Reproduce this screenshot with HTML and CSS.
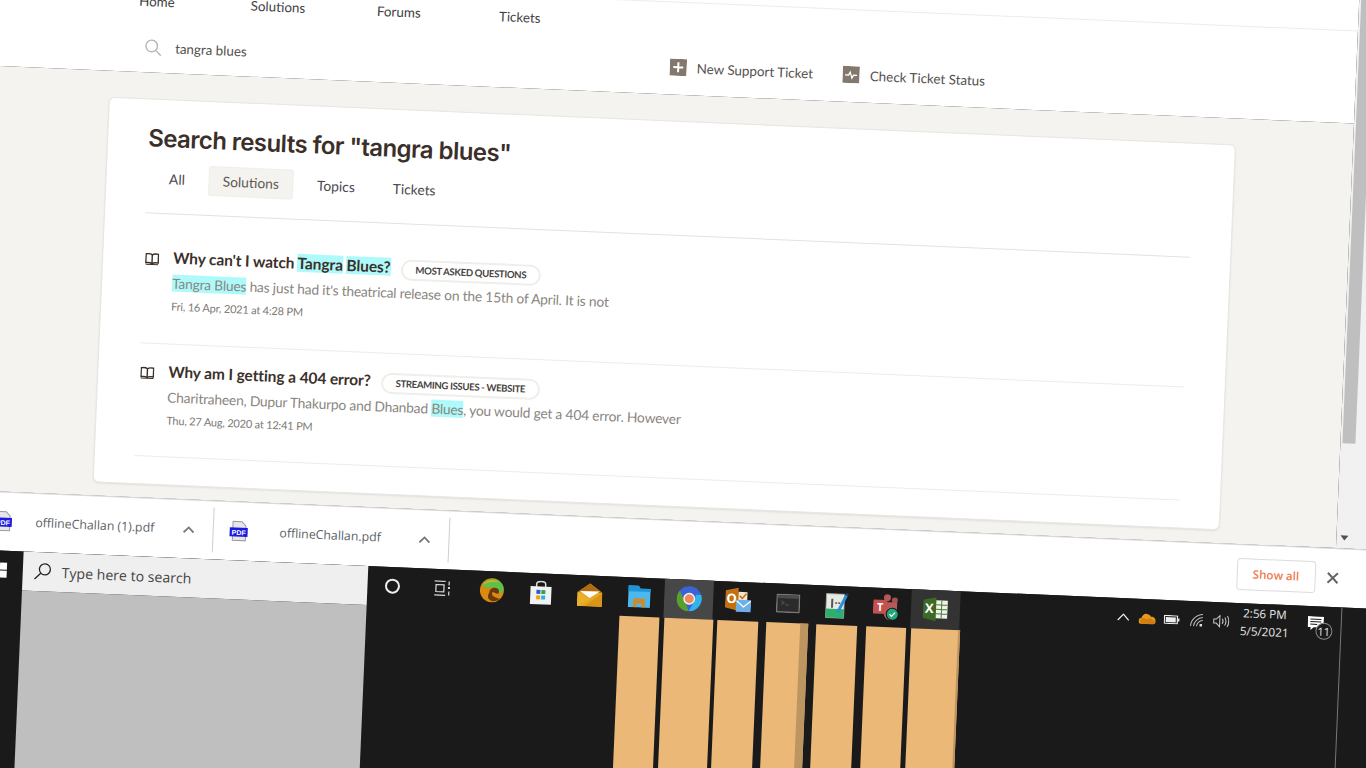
FILE: index.html
```html
<!DOCTYPE html>
<html lang="en">
<head>
    <meta charset="UTF-8">
    <title>Search results</title>
    <link rel="stylesheet" href="styles.css">
</head>
<body>
<div class="screen">
    <div class="browser">
        <div class="page">
            <header class="header">
                <div class="nav-line"></div>
                <nav class="nav">
                    <a>Home</a>
                    <a>Solutions</a>
                    <a>Forums</a>
                    <a>Tickets</a>
                </nav>
                <div class="tools">
                    <div class="search">
                        <svg width="18" height="18" viewBox="0 0 18 18" fill="none" stroke="#b5b5b5" stroke-width="1.4"><circle cx="7.5" cy="7.5" r="5.8"/><path d="M12 12l5 5"/></svg>
                        <span>tangra blues</span>
                    </div>
                    <a class="tool-link">
                        <svg width="17" height="17" viewBox="0 0 17 17"><rect width="17" height="17" fill="#83786d"/><path d="M8.5 3.5v10M3.5 8.5h10" stroke="#fff" stroke-width="2"/></svg>
                        New Support Ticket
                    </a>
                    <a class="tool-link">
                        <svg width="17" height="17" viewBox="0 0 17 17"><rect width="17" height="17" fill="#83786d"/><path d="M2.5 9h3.5l1.5-3 2 6 1.5-3h3.5" fill="none" stroke="#fff" stroke-width="1.3"/></svg>
                        Check Ticket Status
                    </a>
                </div>
            </header>
            <main class="main">
                <section class="card">
                    <h1 class="card-title">Search results for "tangra blues"</h1>
                    <div class="tabs">
                        <a class="tab">All</a>
                        <a class="tab tab-active">Solutions</a>
                        <a class="tab">Topics</a>
                        <a class="tab">Tickets</a>
                    </div>
                    <div class="results">
                        <article class="result">
                            <svg class="book" width="14" height="13" viewBox="0 0 14 13" fill="none" stroke="#3a3028" stroke-width="1.4"><path d="M7 2.2C5.5 1 3 1 .8 1.4v8.8C3 9.8 5.5 9.8 7 11c1.500-1.200 4-1.200 6.200-.8V1.400C11 1 8.500 1 7 2.200zM7 2.200V11"/><path d="M.8 11.800h12.400" stroke-width="1"/></svg>
                            <div>
                                <div class="result-head">
                                    <h2 class="result-title">Why can't I watch <mark>Tangra</mark> <mark>Blues?</mark></h2>
                                    <span class="pill">MOST ASKED QUESTIONS</span>
                                </div>
                                <p class="snippet"><mark>Tangra Blues</mark> has just had it's theatrical release on the 15th of April. It is not</p>
                                <p class="date">Fri, 16 Apr, 2021 at 4:28 PM</p>
                            </div>
                        </article>
                        <article class="result">
                            <svg class="book" width="14" height="13" viewBox="0 0 14 13" fill="none" stroke="#3a3028" stroke-width="1.4"><path d="M7 2.2C5.5 1 3 1 .8 1.4v8.8C3 9.8 5.5 9.8 7 11c1.500-1.200 4-1.200 6.200-.8V1.400C11 1 8.500 1 7 2.200zM7 2.200V11"/><path d="M.8 11.800h12.400" stroke-width="1"/></svg>
                            <div>
                                <div class="result-head">
                                    <h2 class="result-title">Why am I getting a 404 error?</h2>
                                    <span class="pill">STREAMING ISSUES - WEBSITE</span>
                                </div>
                                <p class="snippet">Charitraheen, Dupur Thakurpo and Dhanbad <mark>Blues</mark>, you would get a 404 error. However</p>
                                <p class="date">Thu, 27 Aug, 2020 at 12:41 PM</p>
                            </div>
                        </article>
                    </div>
                </section>
            </main>
        </div>
        <div class="scrollbar">
            <div class="thumb"></div>
            <div class="arrow"></div>
        </div>
    </div>

    <div class="shelf">
        <div class="dl-item">
            <svg class="pdf" width="20" height="21" viewBox="0 0 20 21"><path d="M4 1h9l4 4v15H4z" fill="#e6e6e6" stroke="#9a9a9a"/><rect x="1" y="7" width="18" height="9" fill="#1a1ae0"/><text x="10" y="14.500" class="pdf-label">PDF</text></svg>
            <span class="dl-name">offlineChallan (1).pdf</span>
            <svg class="dl-chevron" width="12" height="8" viewBox="0 0 12 8" fill="none" stroke="#777" stroke-width="1.800"><path d="M1 7l5-5 5 5"/></svg>
        </div>
        <div class="dl-item">
            <svg class="pdf" width="20" height="21" viewBox="0 0 20 21"><path d="M4 1h9l4 4v15H4z" fill="#e6e6e6" stroke="#9a9a9a"/><rect x="1" y="7" width="18" height="9" fill="#1a1ae0"/><text x="10" y="14.500" class="pdf-label">PDF</text></svg>
            <span class="dl-name">offlineChallan.pdf</span>
            <svg class="dl-chevron" width="12" height="8" viewBox="0 0 12 8" fill="none" stroke="#777" stroke-width="1.800"><path d="M1 7l5-5 5 5"/></svg>
        </div>
        <a class="show-all">Show all</a>
        <svg class="shelf-close" width="20" height="12" viewBox="0 0 20 12" fill="none" stroke="#666" stroke-width="2"><path d="M5 1l10 10M15 1L5 11"/></svg>
    </div>

    <div class="taskbar">
        <div class="task-top">
            <div class="start">
                <div class="win-logo"><i></i><i></i><i></i><i></i></div>
            </div>
            <div class="task-search">
                <svg width="18" height="18" viewBox="0 0 18 18" fill="none" stroke="#222" stroke-width="1.300"><circle cx="11" cy="7" r="5.500"/><path d="M7 11l-6 6"/></svg>
                <span>Type here to search</span>
            </div>
            <div class="task-icons">
                <div class="task-btn"><svg width="16" height="16" viewBox="0 0 16 16" fill="none" stroke="#eee" stroke-width="2"><circle cx="8" cy="8" r="6.500"/></svg></div>
                <div class="task-btn"><svg width="18" height="16" viewBox="0 0 18 16" fill="none" stroke="#ddd" stroke-width="1.200"><path d="M1 1h11M1 15h11M2.500 4.500h8v7h-8zM15.500 1v4M15.500 11v4"/><rect x="14.500" y="6.500" width="2" height="2" fill="#ddd" stroke="none"/></svg></div>
                <div class="task-btn"><svg width="25" height="26" viewBox="0 0 25 26"><circle cx="12.500" cy="13" r="12" fill="#d98a12"/><path d="M3 8C6 1 18-1 23 7c2 4 1 8-2 9-2-4-6-7-11-6-3 .500-5 1-7-2z" fill="#5cc24c"/><path d="M3 8c3-5 12-7 16-3-5-2-12 0-16 3z" fill="#d9b526"/><path d="M10 15c0-4 5-6 8-4 2 1 2 4 1 5-3 .500-4-2-6-1-1 2 1 4 4 5 2 1 3 1 4 1-3 3-8 4-11 1-2-2-1-5 0-7z" fill="#6b3a0a"/></svg></div>
                <div class="task-btn"><svg width="23" height="25" viewBox="0 0 23 25"><path d="M7 7V3.500C7 1.500 8.500 1 11.500 1S16 1.500 16 3.500V7" fill="none" stroke="#ddd" stroke-width="1.500"/><path d="M1 6h21v18H1z" fill="#f2f2f2"/><rect x="7" y="9.500" width="4" height="4" fill="#2b5bd6"/><rect x="12" y="9.500" width="4" height="4" fill="#3d9e3d"/><rect x="7" y="15" width="4" height="4" fill="#f5a500"/><rect x="12" y="15" width="4" height="4" fill="#21b5ee"/></svg></div>
                <div class="task-btn"><svg width="25" height="24" viewBox="0 0 25 24"><path d="M0 10L12.500 1 25 10v14H0z" fill="#e8a820"/><path d="M0 10L12.500 1 25 10z" fill="#b06a10"/><path d="M2.500 9l20-.500-10 7z" fill="#fff"/><path d="M0 10l12.500 7-12.500 7z" fill="#eab02c"/><path d="M25 10v14H7z" fill="#d9951a"/></svg></div>
                <div class="task-btn"><svg width="24" height="22" viewBox="0 0 24 22"><path d="M1 0h10l2 3h10v19H1z" fill="#4db8ec"/><path d="M1 0h10l2 3h10v3H1z" fill="#1e95d8"/><path d="M6 13h12v9h-3.500v-4h-5v4H6z" fill="#d08a2e"/></svg></div>
                <div class="task-btn task-on"><svg width="26" height="26" viewBox="0 0 24 24"><circle cx="12" cy="12" r="11.500" fill="#3b63d8"/><path d="M3 5l6 11 3 7.500C5 24 0 18 .5 12 .6 9 1.500 7 3 5z" fill="#5a9e2c"/><path d="M23.500 12c0 6-5 11.500-11.500 11.500l5-10 1-5.500h5c.3 1 .5 3 .5 4z" fill="#31b5e8"/><circle cx="12" cy="12" r="5.500" fill="#f2f2f2"/><circle cx="12" cy="12" r="4.200" fill="#ef8a5e"/></svg></div>
                <div class="task-btn"><svg width="26" height="26" viewBox="0 0 26 26"><path d="M0 3l13-3v23L0 20z" fill="#c46f12"/><text x="6.300" y="15.500" class="icon-letter">O</text><rect x="13" y="4" width="9" height="9" fill="#f3e5cf"/><path d="M14.500 8l2.500 2.500 4-5" fill="none" stroke="#c46f12" stroke-width="1.500"/><path d="M11 12h15v12H11z" fill="#6db0e8"/><path d="M11.500 13l7 6 7-6" fill="none" stroke="#fff" stroke-width="1.200"/></svg></div>
                <div class="task-btn"><svg width="24" height="19" viewBox="0 0 24 19"><rect x=".7" y=".7" width="22.600" height="17.600" fill="#2b2b2b" stroke="#777" stroke-width="1.400"/><rect x="1.500" y="1.500" width="21" height="3" fill="#4c4c4c"/><path d="M5 7l3 2-3 2M9 11h4" fill="none" stroke="#555" stroke-width="1"/></svg></div>
                <div class="task-btn"><svg width="24" height="27" viewBox="0 0 24 27"><path d="M1 2h18v24H1z" fill="#e6ebe2" stroke="#a8a8a8" stroke-width=".8"/><path d="M1 17h18v9H1z" fill="#2fae6e"/><path d="M6 7h2v9H6z" fill="#555"/><path d="M10 11h5" stroke="#555" stroke-width="1.500" stroke-dasharray="2 1"/><path d="M13 20L21 3" stroke="#2a8fd8" stroke-width="3"/><path d="M21 3l1-2" stroke="#2a3f66" stroke-width="3"/></svg></div>
                <div class="task-btn"><svg width="26" height="27" viewBox="0 0 26 27"><circle cx="14" cy="3.500" r="3.500" fill="#b7575a"/><circle cx="21.500" cy="6" r="3" fill="#a85054"/><path d="M10 8h14v11a6 6 0 0 1-13 1z" fill="#b5595b"/><rect x="0" y="6" width="14" height="14" rx="1" fill="#c4504f"/><text x="7" y="17" class="icon-letter icon-letter-mid">T</text><circle cx="19.500" cy="20" r="6.500" fill="#1a1a1a"/><circle cx="19.500" cy="20" r="5.500" fill="#22a87a"/><path d="M16.800 20l2 2 3.500-3.800" fill="none" stroke="#fff" stroke-width="1.200"/></svg></div>
                <div class="task-btn task-on-dim"><svg width="25" height="24" viewBox="0 0 25 24"><path d="M0 3l13-3v24L0 21z" fill="#3c6a26"/><text x="6.300" y="16" class="icon-letter">X</text><rect x="13" y="3" width="11.500" height="18" fill="#eef3ea"/><path d="M13 7.500h11.500M13 12h11.500M13 16.500h11.500M18.500 3v18" stroke="#4d7a38" stroke-width="1"/></svg></div>
            </div>
            <div class="tray">
                <div class="tray-icon"><svg width="13" height="8" viewBox="0 0 13 8" fill="none" stroke="#eee" stroke-width="1.300"><path d="M1 7l5.500-6L12 7"/></svg></div>
                <div class="tray-icon"><svg width="17" height="11" viewBox="0 0 17 11"><path d="M3 11a3 3 0 0 1-.5-6C3.500 2 6 0 8.500 1c1.500 0 3 1 3.500 2.500 2-.5 5 1 5 4 0 2-1 3.500-3 3.500z" fill="#e89a1c"/><path d="M3 11a3 3 0 0 1 0-5.500c2-1 4 0 5 1 1-1 4-2 6 0 2 .5 3 1.500 3 2.500-.5 1-1.500 2-3 2z" fill="#d17f10"/></svg></div>
                <div class="tray-icon"><svg width="16" height="9" viewBox="0 0 16 9"><rect x=".6" y=".6" width="13" height="7.800" fill="none" stroke="#eee" stroke-width="1.200"/><rect x="2" y="2" width="10" height="5" fill="#eee"/><rect x="14.300" y="3" width="1.500" height="3" fill="#eee"/></svg></div>
                <div class="tray-icon"><svg width="14" height="14" viewBox="0 0 14 14" fill="none" stroke="#bbb" stroke-width="1"><path d="M1 13C1 7 6 1.500 13 1M4 13c0-4 4-8.500 9-9M7 13c0-2.500 2.500-6 6-6"/><rect x="10" y="10.500" width="2.500" height="2.500" fill="#ddd" stroke="none"/></svg></div>
                <div class="tray-icon"><svg width="17" height="14" viewBox="0 0 17 14" fill="none" stroke="#ccc" stroke-width="1"><path d="M1 5h2.500L7 1.500v11L3.500 9H1zM9.500 4.500c1 1.500 1 3.500 0 5M12 3c1.500 2.500 1.500 5.500 0 8M14.500 1.500c2 3 2 8 0 11"/></svg></div>
            </div>
            <div class="clock">
                <span>2:56 PM</span>
                <span>5/5/2021</span>
            </div>
            <div class="notify">
                <svg width="16" height="15" viewBox="0 0 16 15"><path d="M0 0h16v11H6l-3 3v-3H0z" fill="#fff"/><path d="M2.500 3h11M2.500 5.500h11M2.500 8h7" stroke="#1a1a1a" stroke-width="1"/></svg>
                <span class="badge">11</span>
            </div>
            <div class="desk-peek"></div>
        </div>
        <div class="task-lower">
            <div class="gray-panel"></div>
            <div class="bar bar-1"></div>
            <div class="bar bar-2"></div>
            <div class="bar bar-3"></div>
            <div class="bar bar-4"></div>
            <div class="bar bar-5"></div>
            <div class="bar bar-6"></div>
            <div class="bar bar-7"></div>
            <div class="desk-peek lower-peek"></div>
        </div>
    </div>
</div>
</body>
</html>
```
FILE: styles.css
```css
html, body {
    margin: 0;
    height: 100%;
    overflow: hidden;
    background: #1a1a1a;
}
body {
    font-family: "Lato", "Noto Sans", sans-serif;
}
a {
    color: inherit;
}
p, h1, h2 {
    margin: 0;
}
mark {
    background: #aefafa;
    color: inherit;
}

/* the whole screen was shot at a slight tilt */
.screen {
    width: 1410px;
    height: 835px;
    display: flex;
    flex-direction: column;
    transform: translate(-7.45px, -60.4px) rotate(2.43deg);
    transform-origin: 0 0;
}
.browser {
    display: flex;
    height: 551px;
    flex: none;
}
.page {
    width: 1368px;
    flex: none;
    display: flex;
    flex-direction: column;
}

.header {
    height: 125.5px;
    flex: none;
    background: #fff;
    color: #4a4540;
    font-size: 13.4px;
}
.nav-line {
    height: 32.5px;
    border-bottom: 1px solid #ececec;
}
.nav {
    display: grid;
    grid-template-columns: repeat(4, 121px);
    height: 42px;
    align-items: center;
    margin-left: 106.5px;
    text-align: center;
    color: #3f3f45;
}
.tools {
    display: flex;
    align-items: center;
    height: 49px;
}
.search {
    display: flex;
    align-items: center;
    gap: 13px;
    width: 526px;
    margin: 2px 0 0 156px;
    color: #55504c;
}
.tool-link {
    display: flex;
    align-items: center;
    gap: 10px;
    margin: 0 30px 2px 0;
    color: #54504e;
}
.tool-link svg {
    margin-bottom: 2px;
}

.main {
    flex: 1;
    background: #f4f3ef;
    padding: 26.5px 0 0 123px;
}
.card {
    width: 1128px;
    height: 386px;
    box-sizing: border-box;
    background: #fff;
    border: 1px solid #e8e6e1;
    border-radius: 6px;
    box-shadow: 0 1px 2px rgba(0, 0, 0, .08);
    padding: 23px 40px 0 40px;
}
.card-title {
    font-family: "Inter", sans-serif;
    font-weight: 600;
    font-size: 24px;
    letter-spacing: -.55px;
    line-height: 32px;
    color: #3b2f29;
}
.tabs {
    display: flex;
    gap: 11px;
    margin: 10px 0 20px 9px;
}
.tab {
    height: 28px;
    line-height: 28px;
    padding: 0 13.5px;
    font-size: 13.8px;
    color: #4a4650;
}
.tab-active {
    background: #f4f3ef;
    border-radius: 2px;
    box-shadow: 0 0 0 1px #efeeea;
    color: #5e5853;
}

.results {
    border-top: 1px solid #e2e2e2;
    padding-top: 16px;
}
.result {
    display: flex;
    gap: 14px;
    padding: 18px 0 26.5px 2px;
    border-bottom: 1px solid #ececec;
}
.book {
    flex: none;
    margin-top: 5px;
}
.result-head {
    display: flex;
    align-items: center;
    gap: 10px;
    height: 24px;
    margin: -3px 0 3px;
}
.result-title {
    font-size: 15.5px;
    font-weight: 700;
    letter-spacing: -.1px;
    color: #3b302a;
}
.pill {
    height: 17px;
    line-height: 17px;
    padding: 0 13px;
    margin-top: 5px;
    border: 2px solid #eeeeea;
    border-radius: 11px;
    font-size: 9.6px;
    font-weight: 700;
    letter-spacing: -.35px;
    color: #47423e;
}
.snippet {
    height: 22px;
    line-height: 22px;
    font-size: 13.8px;
    letter-spacing: -.2px;
    color: #8a8580;
}
.date {
    height: 22px;
    line-height: 24px;
    font-size: 11px;
    letter-spacing: -.2px;
    color: #7d7873;
}

.scrollbar {
    flex: 1;
    display: flex;
    flex-direction: column;
    background: #f1f1f1;
}
.thumb {
    width: 13px;
    height: 446px;
    margin-left: 2px;
    background: #bfbfbf;
}
.arrow {
    width: 0;
    margin: auto 0 8px 4px;
    border: 4px solid transparent;
    border-top: 5px solid #505050;
    border-bottom: 0;
}

.shelf {
    height: 58.5px;
    flex: none;
    box-sizing: border-box;
    display: flex;
    align-items: center;
    background: #fff;
    border-top: 1px solid #d8d8d8;
    padding: 0 34px 0 10.5px;
}
.dl-item {
    width: 235.5px;
    height: 45px;
    flex: none;
    box-sizing: border-box;
    display: flex;
    align-items: center;
    border-right: 1px solid #cfcfcf;
}
.pdf {
    margin-left: 14.5px;
    flex: none;
}
.pdf-label {
    font-family: "Liberation Sans", sans-serif;
    font-size: 7px;
    font-weight: 700;
    fill: #fff;
    text-anchor: middle;
}
.dl-name {
    flex: 1;
    padding-left: 6px;
    text-align: center;
    font-family: "Open Sans", sans-serif;
    font-size: 12.3px;
    color: #5c5f66;
}
.dl-chevron {
    flex: none;
    margin: 0 18px 0 12px;
}
.show-all {
    margin-left: auto;
    width: 79.5px;
    height: 32px;
    line-height: 30px;
    box-sizing: border-box;
    border: 1px solid #dcdcdc;
    border-radius: 4px;
    text-align: center;
    font-family: "Open Sans", sans-serif;
    font-size: 11.6px;
    font-weight: 600;
    color: #ef7a50;
}
.shelf-close {
    margin-left: 7px;
}

.taskbar {
    flex: 1;
    display: flex;
    flex-direction: column;
    background: #1a1a1a;
}
.task-top {
    display: flex;
    height: 39px;
    flex: none;
}
.start {
    width: 57px;
    flex: none;
    display: flex;
    align-items: center;
    justify-content: center;
}
.win-logo {
    display: grid;
    grid-template-columns: 7px 7px;
    grid-auto-rows: 7px;
    gap: 1px;
    margin-left: 10px;
}
.win-logo i {
    background: #fff;
}
.task-search {
    width: 345.3px;
    flex: none;
    display: flex;
    align-items: center;
    gap: 10px;
    padding-left: 11px;
    box-sizing: border-box;
    background: #efefef;
    font-family: "Open Sans", sans-serif;
    font-size: 14.1px;
    color: #444;
}
.task-icons {
    display: flex;
    margin-left: .4px;
}
.task-btn {
    width: 49.4px;
    display: flex;
    align-items: center;
    justify-content: center;
}
.task-on {
    background: #474747;
}
.task-on-dim {
    background: #333;
}
.tray {
    display: flex;
    margin-left: 150.5px;
}
.tray-icon {
    width: 24.6px;
    display: flex;
    align-items: center;
    justify-content: center;
}
.clock {
    width: 62px;
    display: flex;
    flex-direction: column;
    justify-content: center;
    align-items: center;
    font-family: "Open Sans", sans-serif;
    font-size: 11.7px;
    line-height: 17.6px;
    color: #e8e8e8;
}
.notify {
    width: 40px;
    position: relative;
    display: flex;
    align-items: center;
    justify-content: center;
}
.notify svg {
    margin-bottom: 4px;
}
.badge {
    position: absolute;
    left: 20px;
    top: 16px;
    width: 15px;
    height: 15px;
    line-height: 15px;
    border: 1px solid #8a8a8a;
    border-radius: 50%;
    background: #1a1a1a;
    text-align: center;
    font-family: "Open Sans", sans-serif;
    font-size: 11px;
    color: #e8e8e8;
}
.desk-peek {
    margin-left: 5px;
    border-left: 1px solid #777;
    flex: none;
    width: 33px;
}

/* tracks: grey panel, then the seven blocks under the taskbar icons */
.task-lower {
    flex: 1;
    display: grid;
    grid-template-columns: 345.3px 293.6px 53.6px 45.1px 49.9px 49px 49.4px 53.8px 1fr;
    padding-left: 56.3px;
}
.gray-panel {
    background: #bfbfbf;
    margin-left: .7px;
}
.bar {
    background: #ebb878;
}
.bar-1 { margin-left: 253.3px; }
.bar-2 { margin-left: 5px; }
.bar-3 { margin-left: 4.7px; }
.bar-4 {
    margin-left: 8.6px;
    border-right: 8.8px solid #bd9560;
}
.bar-5 { margin-left: 8.5px; }
.bar-6 { margin-left: 8.9px; }
.bar-7 {
    margin-left: 4.4px;
    border-right: 2.5px solid #bd9560;
}
.lower-peek {
    justify-self: end;
    margin: 0;
}

.icon-letter {
    font-family: "Open Sans", sans-serif;
    font-size: 13px;
    font-weight: 700;
    fill: #fff;
    text-anchor: middle;
}
.icon-letter-mid {
    font-size: 11px;
}
```
